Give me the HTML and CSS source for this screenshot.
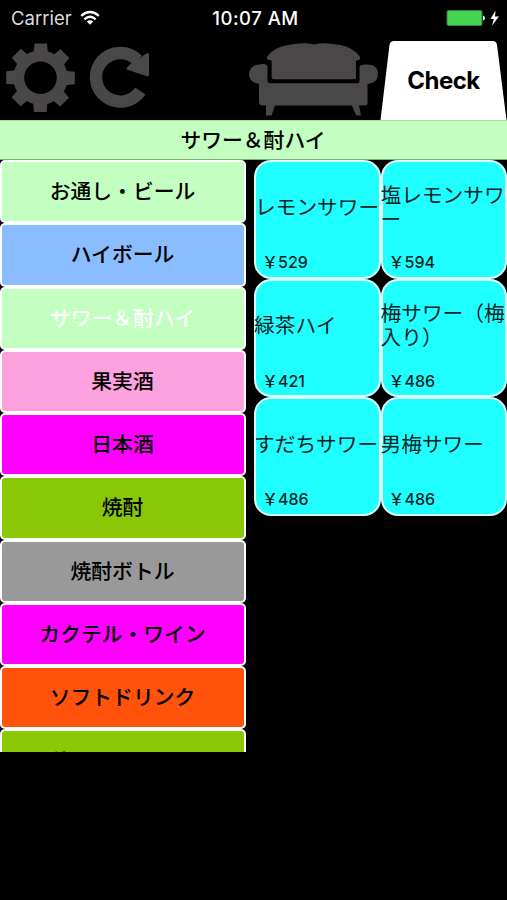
FILE: index.html
```html
<!DOCTYPE html>
<html lang="ja">
<head>
<meta charset="utf-8">
<title>サワー＆酎ハイ</title>
<link rel="stylesheet" href="styles.css">
</head>
<body>
<header class="status">
  <div class="carrier"><span>Carrier</span>
    <svg class="wifi" viewBox="0 0 20 16" width="20" height="16"><g fill="none" stroke="#fff" stroke-width="2.4"><path d="M1.2 5.8Q10-1.8 18.8 5.8"/><path d="M4.4 9.3Q10 4.4 15.6 9.3"/></g><path d="M6.8 11.5Q10 8.8 13.2 11.5L10 14.7Z" fill="#fff"/></svg>
  </div>
  <div class="time">10:07 AM</div>
  <svg class="battery" viewBox="0 0 54 18" width="54" height="18"><rect x="1" y="1.5" width="35" height="15" rx="1.5" fill="#43d551" stroke="#397e3e"/><path d="M37 6.5Q39 7 39 9T37 11.5Z" fill="#fff"/><path d="M49.500 1.500L44.500 10h3.400L46 16.500 53 7.500h-4Z" fill="#fff"/></svg>
</header>
<nav class="toolbar">
  <svg class="gear" viewBox="0 0 70 70" width="70" height="70">
    <defs><path id="tooth" d="M27.500 11L28.500 .4H41L42 11Z"/></defs>
    <circle cx="34.500" cy="34.700" r="21.700" fill="none" stroke="#4a4748" stroke-width="10.800"/>
    <g fill="#4a4748">
      <use href="#tooth"/><use href="#tooth" transform="rotate(45 34.500 34.700)"/><use href="#tooth" transform="rotate(90 34.500 34.700)"/><use href="#tooth" transform="rotate(135 34.500 34.700)"/><use href="#tooth" transform="rotate(180 34.500 34.700)"/><use href="#tooth" transform="rotate(225 34.500 34.700)"/><use href="#tooth" transform="rotate(270 34.500 34.700)"/><use href="#tooth" transform="rotate(315 34.500 34.700)"/>
    </g>
  </svg>
  <svg class="reload" viewBox="0 0 62 64" width="62" height="64"><path d="M51.400 44.900A24.300 24.300 0 1 1 48.500 14.100" fill="none" stroke="#4a4748" stroke-width="12.400"/><path d="M60 8.500V29Q60 30.600 58 30.200L38.500 23.700Q36.500 22.800 38 21.500L42 17.500L57.500 7.600Q60 6.500 60 8.500Z" fill="#4a4748"/></svg>
  <svg class="sofa" viewBox="0 0 130 74" width="130" height="74"><g fill="#4a4748"><path d="M18 15Q25 5 39 3Q56 0 65 2.500Q74 0 91 3Q104 5 111 15Q112 18.500 107 18.500V35Q107 37.300 105 37.300H26Q22.600 37.300 22.600 35V18.500Q17 18 18 15Z"/><path d="M10 22.500Q18.500 21 18.500 25V39Q18.500 41.300 21 41.300H108.500Q110.500 41.300 110.500 39V25Q110.500 22 118 22.500Q129 22.500 129 32Q129 41 118.500 42V61Q118.500 63.500 116 63.500H110L112 73.500H107.500Q104.500 68 103 63.500H26L22.500 73.500H17V63.500H14Q10 63.500 10 60V42Q0 40 0 32Q1 23 10 22.500Z"/></g></svg>
  <div class="check">
    <svg class="tab" viewBox="0 0 127 80" width="127" height="80"><path d="M.5 80L9.500 5Q10 1 14 1H112.500Q116.500 1 117 5L126.500 80Z" fill="#fff"/></svg>
    <span class="check-label">Check</span>
  </div>
</nav>
<h1 class="title">サワー＆酎ハイ</h1>
<main class="content">
  <div class="categories">
    <div class="category mint">お通し・ビール</div>
    <div class="category blue">ハイボール</div>
    <div class="category mint selected">サワー＆酎ハイ</div>
    <div class="category pink">果実酒</div>
    <div class="category magenta">日本酒</div>
    <div class="category green">焼酎</div>
    <div class="category gray">焼酎ボトル</div>
    <div class="category magenta">カクテル・ワイン</div>
    <div class="category orange">ソフトドリンク</div>
    <div class="category green">サイドメニュー</div>
  </div>
  <div class="items">
    <div class="item"><p class="name inset">レモンサワー</p><p class="price"><span>￥</span>529</p></div>
    <div class="item"><p class="name">塩レモンサワ<br>ー</p><p class="price"><span>￥</span>594</p></div>
    <div class="item"><p class="name">緑茶ハイ</p><p class="price"><span>￥</span>421</p></div>
    <div class="item"><p class="name">梅サワー（梅<br>入り）</p><p class="price"><span>￥</span>486</p></div>
    <div class="item"><p class="name">すだちサワー</p><p class="price"><span>￥</span>486</p></div>
    <div class="item"><p class="name">男梅サワー</p><p class="price"><span>￥</span>486</p></div>
  </div>
</main>
</body>
</html>
```
FILE: styles.css
```css
* { box-sizing: border-box; }
body { margin: 0; width: 507px; height: 900px; overflow: hidden; background: #000; font-family: Inter, "Noto Sans CJK JP", sans-serif; }
h1, p { margin: 0; }
.status { height: 36px; display: grid; grid-template-columns: 1fr auto 1fr; align-items: center; padding: 0 7px 0 11px; color: #fff; font-size: 18px; }
.carrier { display: flex; align-items: center; gap: 8px; color: #ddd; font-size: 18.5px; }
.time { font-size: 18.5px; font-weight: 500; letter-spacing: .5px; }
.battery { justify-self: end; }
.toolbar { height: 84px; display: flex; align-items: flex-start; }
.gear { margin: 7px 0 0 6px; }
.reload { margin: 10px 0 0 13px; }
.sofa { margin: 6px 0 0 98px; }
.check { display: grid; margin: 4px 0 0 1px; width: 127px; height: 80px; }
.tab, .check-label { grid-area: 1 / 1; }
.check-label { align-self: center; text-align: center; font-size: 24px; font-weight: 700; letter-spacing: -.5px; }
.title { height: 40px; padding-right: 1px; background: #c3ffc1; text-align: center; font-size: 20.8px; font-weight: 500; line-height: 39px; border-top: 1px solid #a9dca7; border-bottom: 1px solid #83aa82; }
.content { display: flex; gap: 8px; align-items: flex-start; }
.categories { width: 246px; height: 592px; overflow: hidden; }
.category { height: 63.25px; padding-right: 1px; border: 2px solid #fff; border-radius: 5px; text-align: center; font-size: 20.8px; font-weight: 500; line-height: 59px; color: #000; }
.mint { background: #c3ffc1; }
.blue { background: #8abdff; }
.pink { background: #fda1df; }
.magenta { background: #f0f; }
.green { background: #8ac806; }
.gray { background: #999; }
.orange { background: #ff520a; }
.selected { color: #fff; }
.items { width: 253px; display: grid; grid-template-columns: repeat(2, minmax(0, 1fr)); grid-auto-rows: 118.5px; }
.item { display: flex; flex-direction: column; border: 2px solid #d9ffff; border-radius: 17px; background: #20ffff; color: #052525; }
.name { height: 90px; padding-top: 1px; display: flex; align-items: center; margin-left: -2px; font-size: 20.7px; line-height: 24px; white-space: nowrap; }
.inset { padding-left: 1px; }
.price { padding-left: 6px; font-size: 16px; line-height: 21px; font-weight: 500; display: flex; }
.price span { width: 16px; text-align: center; }
```
